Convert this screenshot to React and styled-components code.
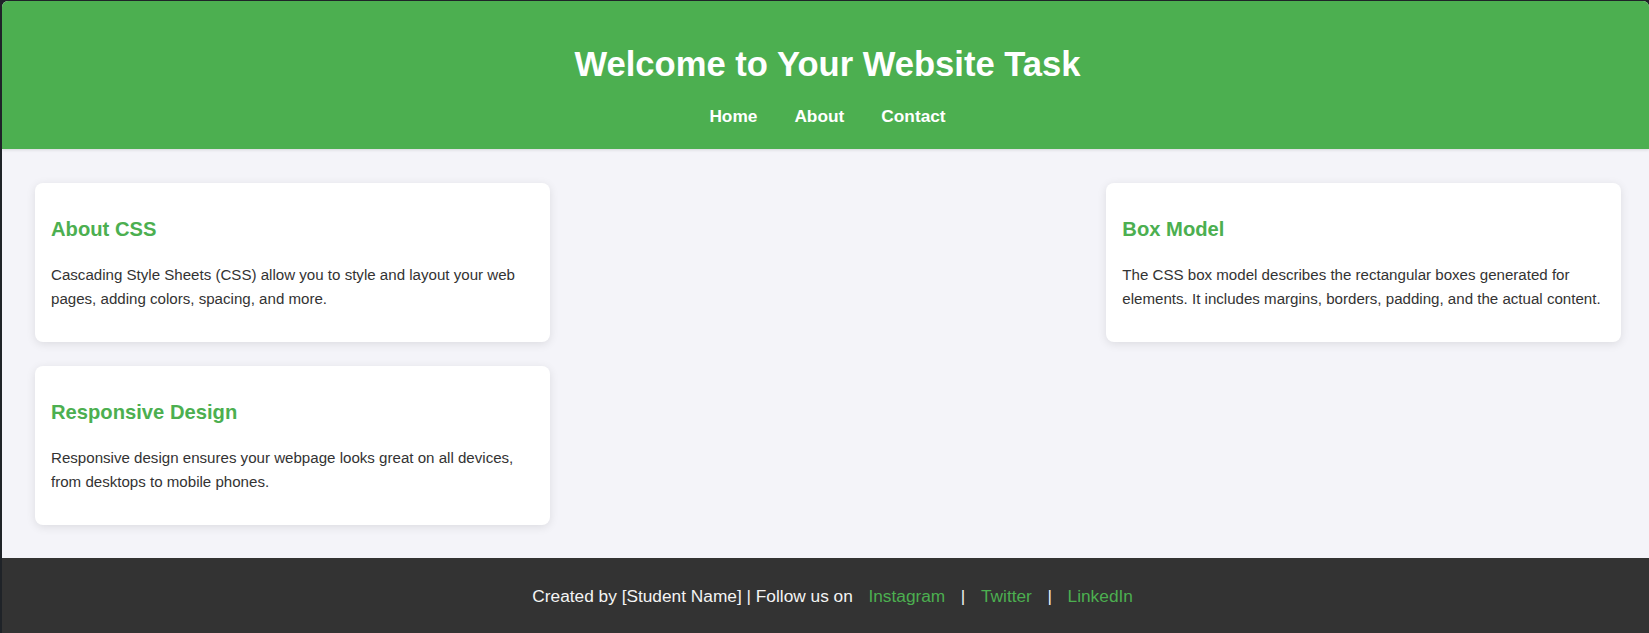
import React from "react";
import styled, { createGlobalStyle } from "styled-components";

const GlobalStyle = createGlobalStyle`
  html, body {
    margin: 0;
    padding: 0;
    height: 100%;
    overflow: hidden;
  }
  body {
    background: #1f2328;
    font-family: "Liberation Sans", Arial, sans-serif;
    color: #333;
  }
`;

const Page = styled.div`
  margin: 1px 0 0 2px;
  height: 632px;
  display: flex;
  flex-direction: column;
  background: #f4f4f9;
  border-radius: 6px 6px 0 0;
  overflow: hidden;
`;

const Header = styled.header`
  background: #4caf50;
  color: #fff;
  text-align: center;
  padding: 44px 0 22px 4px;
  box-shadow: 0 1px 3px rgba(0, 0, 0, 0.12);
`;

const Title = styled.h1`
  margin: 0;
  font-size: 34.6px;
  line-height: 39px;
  font-weight: 700;
`;

const Nav = styled.nav`
  margin-top: 23px;
  display: flex;
  justify-content: center;
  gap: 37px;
`;

const NavLink = styled.a`
  color: #fff;
  text-decoration: none;
  font-weight: 700;
  font-size: 17.3px;
  line-height: 19.5px;
`;

const Main = styled.main`
  flex: 1;
  padding: 34px 28px 32px 33px;
  display: grid;
  grid-template-columns: repeat(3, 1fr);
  grid-auto-rows: min-content;
  gap: 24px 21px;
`;

const Card = styled.section`
  grid-column: ${(p) => p.$col};
  background: #fff;
  border-radius: 8px;
  padding: 0 16px;
  box-shadow: 0 2px 10px rgba(0, 0, 0, 0.1);
  display: flow-root;
`;

const CardTitle = styled.h3`
  margin: 35px 0 22px;
  font-size: 20.2px;
  line-height: 23px;
  color: #4caf50;
`;

const CardText = styled.p`
  margin: 0 0 31px;
  font-size: 15.1px;
  line-height: 24px;
  color: #333;
`;

const Footer = styled.footer`
  background: #333;
  color: #f4f4f4;
  text-align: center;
  padding: 29px 0 27px 25px;
  font-size: 17.3px;
  line-height: 19.5px;
`;

const SocialLink = styled.a`
  color: #4caf50;
  text-decoration: none;
  margin: 0 10.8px;
`;

const cards = [
  {
    title: "About CSS",
    col: 1,
    text: "Cascading Style Sheets (CSS) allow you to style and layout your web pages, adding colors, spacing, and more.",
  },
  {
    title: "Box Model",
    col: 3,
    text: "The CSS box model describes the rectangular boxes generated for elements. It includes margins, borders, padding, and the actual content.",
  },
  {
    title: "Responsive Design",
    col: 1,
    text: "Responsive design ensures your webpage looks great on all devices, from desktops to mobile phones.",
  },
];

export default function App() {
  return (
    <>
      <GlobalStyle />
      <Page>
        <Header>
          <Title>Welcome to Your Website Task</Title>
          <Nav>
            <NavLink href="#">Home</NavLink>
            <NavLink href="#">About</NavLink>
            <NavLink href="#">Contact</NavLink>
          </Nav>
        </Header>
        <Main>
          {cards.map((c) => (
            <Card key={c.title} $col={c.col}>
              <CardTitle>{c.title}</CardTitle>
              <CardText>{c.text}</CardText>
            </Card>
          ))}
        </Main>
        <Footer>
          Created by [Student Name] | Follow us on{" "}
          <SocialLink href="#">Instagram</SocialLink> |{" "}
          <SocialLink href="#">Twitter</SocialLink> |{" "}
          <SocialLink href="#">LinkedIn</SocialLink>
        </Footer>
      </Page>
    </>
  );
}
